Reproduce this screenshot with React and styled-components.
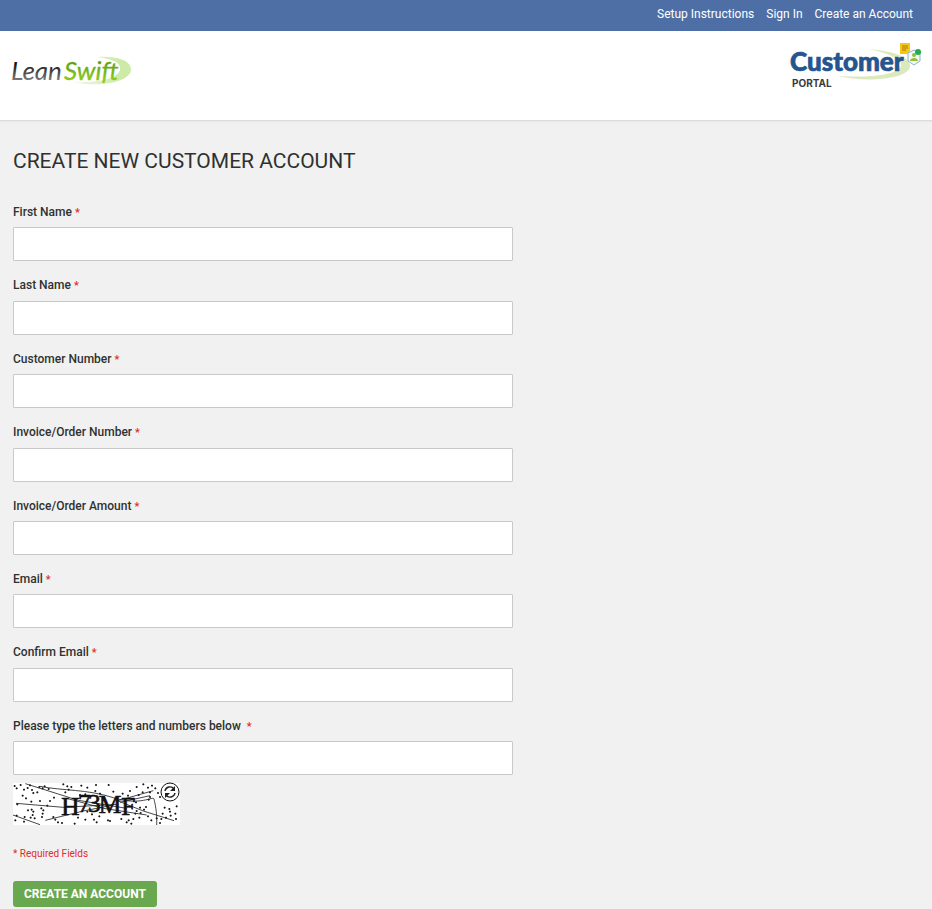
import React from "react";
import styled, { createGlobalStyle } from "styled-components";

const GlobalStyle = createGlobalStyle`
  * { box-sizing: border-box; }
  body { margin: 0; background: #f1f1f1; color: #2f3131; font-family: Roboto, sans-serif; font-size: 12px; }
`;

const TopBar = styled.nav`
  display: flex;
  justify-content: flex-end;
  gap: 12px;
  padding: 5px 19px 8px;
  background: #4d6fa6;
`;

const TopLink = styled.a`
  color: #fff;
  font-size: 12px;
  line-height: 18px;
  text-decoration: none;
`;

const Header = styled.header`
  display: flex;
  justify-content: space-between;
  align-items: flex-start;
  padding: 4px 0 20px;
  background: #fff;
  border-bottom: 1px solid #dcdcdc;
  box-shadow: 0 1px 1px #e8e8e8;
`;

const Logo = styled.svg`
  display: block;
`;

const Main = styled.main`
  padding: 26px 13px 0;
`;

const Title = styled.h1`
  margin: 0 0 29px;
  font-size: 21px;
  line-height: 28px;
  font-weight: 400;
  text-transform: uppercase;
`;

const Form = styled.form`
  max-width: 500px;
`;

const Fields = styled.div`
  display: grid;
  gap: 16px;
`;

const Label = styled.label`
  display: block;
  margin-bottom: 6px;
  font-size: 12px;
  line-height: 1.45;
  font-weight: 500;
`;

const Star = styled.span`
  margin-left: ${(p) => (p.$wide ? "6px" : "3px")};
  color: #e02b27;
  font-size: 11px;
  line-height: 1;
`;

const Input = styled.input`
  display: block;
  width: 100%;
  height: 34px;
  padding: 0 9px;
  border: 1px solid #c9c9c9;
  border-radius: 1px;
  background: #fff;
  font: inherit;
`;

const CaptchaRow = styled.div`
  display: flex;
  margin-top: 8px;
`;

const CaptchaFrame = styled.div`
  position: relative;
`;

const Reload = styled.button`
  position: absolute;
  top: -1px;
  right: 0;
  width: 20px;
  height: 20px;
  padding: 0;
  border: 0;
  border-radius: 50%;
  background: none;
  cursor: pointer;
`;

const Note = styled.p`
  margin: 21px 0 19px;
  color: #e02b27;
  font-size: 10px;
  line-height: 16px;
`;

const Submit = styled.button`
  height: 26px;
  padding: 1px 11px 0;
  border: 0;
  border-radius: 3px;
  background: #6aa84f;
  color: #fff;
  font-family: inherit;
  font-size: 12px;
  font-weight: 700;
  line-height: 25px;
  text-transform: uppercase;
`;

const fields = [
  { id: "firstname", label: "First Name" },
  { id: "lastname", label: "Last Name" },
  { id: "customer", label: "Customer Number" },
  { id: "invoice", label: "Invoice/Order Number" },
  { id: "amount", label: "Invoice/Order Amount" },
  { id: "email", label: "Email" },
  { id: "confirm", label: "Confirm Email" },
  { id: "captcha", label: "Please type the letters and numbers below", wide: true },
];

const specks = [
  [44,33],[50,40],[62,30],[72,44],[83,39],[90,31],[96,45],[100,54],[112,52],[118,36],[128,40],[134,34],[146,42],[190,28],[202,34],[206,44],[214,36],[196,52],
  [68,62],[78,70],[52,88],[94,80],[120,78],[150,78],[142,92],[162,68],[124,100],[95,104],[100,110],[98,120],[92,128],[104,130],[128,116],[126,126],[50,122],[46,136],[74,126],[160,126],[166,134],[174,142],[186,144],[72,140],[84,106],[130,106],
  [244,32],[262,38],[286,48],[288,30],[300,56],[256,58],[240,60],[262,110],[276,118],[256,134],[282,134],[298,124],[290,142],[324,136],[330,138],[224,146],[234,128],[340,50],[368,56],[326,30],
  [390,48],[384,62],[408,82],[416,60],[410,36],[430,28],[444,38],[456,32],[428,52],[450,52],[466,40],[474,54],[420,98],[410,108],[422,114],[406,116],[400,132],[418,128],[432,104],[444,124],[454,136],[438,96],[450,66],[446,74],[480,66],
  [508,102],[510,110],[494,98],[530,94],[488,116],[484,132],[498,128],[512,122],[526,116],[528,132],[470,130],[480,144],[386,136],[394,146],[364,132],[380,142],
];

function LeanSwiftLogo() {
  return (
    <Logo width="150" height="65" viewBox="0 -5 150 65" role="img" aria-label="LeanSwift">
      <defs>
        <linearGradient id="ink" x1="0" y1="0" x2="0" y2="1">
          <stop offset="0.3" stopColor="#111" /><stop offset="0.8" stopColor="#777" />
        </linearGradient>
        <linearGradient id="leaf" x1="0" y1="0" x2="0" y2="1">
          <stop offset="0.2" stopColor="#55961a" /><stop offset="0.8" stopColor="#8fcf16" />
        </linearGradient>
        <linearGradient id="swoosh" x1="0" y1="0" x2="1" y2="0">
          <stop offset="0" stopColor="#f4fae8" /><stop offset="0.8" stopColor="#cdeaa6" />
        </linearGradient>
      </defs>
      <path d="M97 17C119 16 131 21 131 30C130 42 99 48 72 42C98 43 119 39 120 29C121 22 111 19 97 17Z" fill="url(#swoosh)" />
      <g fontFamily="Lato, sans-serif" fontStyle="italic" fontSize="26">
        <text x="11" y="40" fill="url(#ink)">Lean</text>
        <text x="64" y="40" fill="url(#leaf)" stroke="#75b51a" strokeWidth="0.3">Swift</text>
      </g>
    </Logo>
  );
}

function PortalLogo() {
  return (
    <Logo width="152" height="60" viewBox="0 0 152 60" role="img" aria-label="Customer Portal">
      <path d="M88 14C116 16 131 23 130 32C128 44 86 48 58 41C88 43 121 40 121 30C121 23 107 18 88 14Z" fill="#dbe9bd" />
      <text x="10" y="36" fontFamily="Lato, sans-serif" fontSize="26" fontWeight="900" fill="#25558f" stroke="#25558f" strokeWidth="0.7">Customer</text>
      <text x="12" y="52" fontFamily="Inter, sans-serif" fontSize="10" fontWeight="700" fill="#3b3b3d">PORTAL</text>
      <path d="M120 8h10v8l-3 3h-7z" fill="#f9c513" />
      <path d="M122 11h6M122 13h6M122 15h4" stroke="#a57d11" fill="none" />
      <path d="M134 15l6 3v8l-6 4-6-4v-8z" fill="#f4f8fa" stroke="#8fb0c8" />
      <circle cx="134" cy="20" r="2" fill="#91bf35" />
      <path d="M130 26c0-4 8-4 8 0z" fill="#91bf35" />
      <circle cx="138" cy="17" r="3" fill="#1fae4b" />
    </Logo>
  );
}

function Captcha() {
  return (
    <CaptchaFrame>
      <Logo width="167" height="42" viewBox="39 24 501 126" role="img" aria-label="Letters to type">
        <rect x="39" y="24" width="501" height="126" fill="#fff" />
        <g stroke="#111" strokeWidth="3">
          {specks.map(([x, y]) => <path key={`${x}-${y}`} d={`M${x - 3} ${y}h6M${x} ${y - 3}v6`} />)}
        </g>
        <g stroke="#222" strokeWidth="2.5" fill="none">
          <path d="M76 26L235 76L380 100" />
          <path d="M120 34C190 48 260 42 340 68S460 62 462 72S472 110 470 150" />
          <path d="M48 85L190 97L350 88" />
          <path d="M39 120L120 149" />
          <path d="M136 136L250 108L340 90" />
          <path d="M350 78L460 47M360 82L450 62" />
          <path d="M350 76L430 108L522 137" />
          <path d="M200 70L310 100L440 120" />
        </g>
        <text
          x="184 234 264 296 364"
          y="119 110 110 114 120"
          fontFamily="'Liberation Serif', serif"
          fontSize="76"
          fill="#111"
          stroke="#111"
          strokeWidth="2"
        >
          H73MF
        </text>
      </Logo>
      <Reload type="button" aria-label="Reload captcha">
        <Logo width="20" height="20" viewBox="0 0 20 20">
          <circle cx="10" cy="10" r="9" fill="#fff" stroke="#111" />
          <path d="M5 9a5 5 0 0 1 9-2M15 11a5 5 0 0 1-9 2" fill="none" stroke="#222" strokeWidth="1.4" />
          <path d="M15 4v5h-5zM5 16v-5h5z" fill="#222" />
        </Logo>
      </Reload>
    </CaptchaFrame>
  );
}

export default function App() {
  return (
    <>
      <GlobalStyle />
      <TopBar>
        <TopLink href="#setup">Setup Instructions</TopLink>
        <TopLink href="#signin">Sign In</TopLink>
        <TopLink href="#create">Create an Account</TopLink>
      </TopBar>
      <Header>
        <LeanSwiftLogo />
        <PortalLogo />
      </Header>
      <Main>
        <Title>Create New Customer Account</Title>
        <Form>
          <Fields>
            {fields.map((f) => (
              <div key={f.id}>
                <Label htmlFor={f.id}>{f.label}<Star $wide={f.wide}>*</Star></Label>
                <Input id={f.id} name={f.id} required />
              </div>
            ))}
          </Fields>
          <CaptchaRow><Captcha /></CaptchaRow>
          <Note>* Required Fields</Note>
          <Submit type="submit">Create an Account</Submit>
        </Form>
      </Main>
    </>
  );
}
